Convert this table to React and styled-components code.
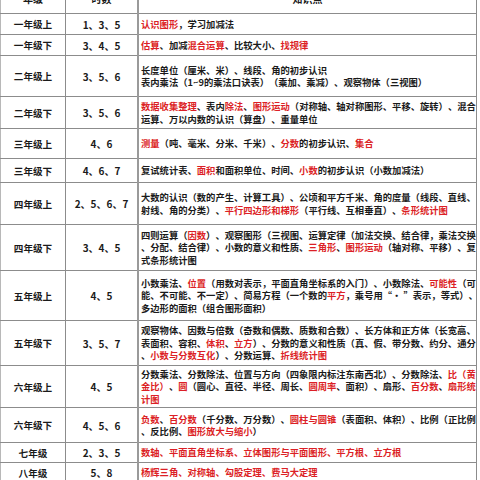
import React from 'react';
import styled, { createGlobalStyle } from 'styled-components';

const GlobalStyle = createGlobalStyle`
  html, body {
    margin: 0;
    padding: 0;
    background: #ffffff;
    overflow: hidden;
  }
  body {
    font-family: "Noto Sans CJK SC", "Noto Sans", sans-serif;
    color: #1a1a1a;
  }
`;

const Page = styled.div`
  width: 480px;
  height: 480px;
  overflow: hidden;
`;

const Table = styled.table`
  margin-top: -20px;
  border-collapse: collapse;
  table-layout: fixed;
  width: 477px;
  text-spacing-trim: space-all;
`;

const Row = styled.tr`
  height: ${(p) => p.h}px;
`;

const Cell = styled.td`
  border: 1px solid #8c8c8c;
  padding: 0;
  vertical-align: middle;
  text-align: center;
  font-weight: 700;
  font-size: 9.6px;
  white-space: nowrap;
  overflow: hidden;
`;

const GradeCell = styled(Cell)`
  width: 64px;
  border-left-color: #b8b8b8;
`;

const UnitCell = styled(Cell)`
  width: 71px;
  font-size: 10px;
  border-right: 2px solid #9a9a9a;
`;

const TopicCell = styled(Cell)`
  text-align: left;
  padding-left: 2px;
  font-size: 9.3px;
  line-height: 12.5px;
  letter-spacing: 0;
`;

const HeadCell = styled(Cell)`
  font-size: 10px;
  line-height: 12px;
  vertical-align: bottom;
  padding-bottom: 8px;
`;

const Line = styled.div`
  white-space: nowrap;
`;

const Mark = styled.span`
  color: #dc1f26;
`;

const rows = [
  { g: '一年级上', u: '1、3、5', h: 21, t: ['[认识图形]，学习加减法'] },
  { g: '一年级下', u: '3、4、5', h: 21, t: ['[估算]、加减[混合运算]、比较大小、[找规律]'] },
  {
    g: '二年级上', u: '3、5、6', h: 41,
    t: ['长度单位（厘米、米）、线段、角的初步认识', '表内乘法（1~9的乘法口诀表）（乘加、乘减）、观察物体（三视图）']
  },
  {
    g: '二年级下', u: '3、5、6', h: 32,
    t: ['[数据收集整理]、表内[除法]、[图形运动]（对称轴、轴对称图形、平移、旋转）、混合', '运算、万以内数的认识（算盘）、重量单位']
  },
  { g: '三年级上', u: '4、6', h: 30, t: ['[测量]（吨、毫米、分米、千米）、[分数]的初步认识、[集合]'] },
  { g: '三年级下', u: '4、6、7', h: 24, t: ['复试统计表、[面积]和面积单位、时间、[小数]的初步认识（小数加减法）'] },
  {
    g: '四年级上', u: '2、5、6、7', h: 42,
    t: ['大数的认识（数的产生、计算工具）、公顷和平方千米、角的度量（线段、直线、', '射线、角的分类）、[平行四边形和梯形]（平行线、互相垂直）、[条形统计图]']
  },
  {
    g: '四年级下', u: '3、4、5', h: 46,
    t: [
      '四则运算（[因数]）、观察图形（三视图、运算定律（加法交换、结合律，乘法交换',
      '、分配、结合律）、小数的意义和性质、[三角形]、[图形运动]（轴对称、平移）、复',
      '式条形统计图'
    ]
  },
  {
    g: '五年级上', u: '4、5', h: 50,
    t: [
      '小数乘法、[位置]（用数对表示，平面直角坐标系的入门）、小数除法、[可能性]（可',
      '能、不可能、不一定）、简易方程（一个数的[平方]，乘号用“• ”表示，等式）、',
      '多边形的面积（组合图形面积）'
    ]
  },
  {
    g: '五年级下', u: '3、5、7', h: 45,
    t: [
      '观察物体、因数与倍数（奇数和偶数、质数和合数）、长方体和正方体（长宽高、',
      '表面积、容积、[体积]、[立方]）、分数的意义和性质（真、假、带分数、约分、通分',
      '、[小数与分数互化]）、分数运算、[折线统计图]'
    ]
  },
  {
    g: '六年级上', u: '4、5', h: 42,
    t: [
      '分数乘法、分数除法、位置与方向（四象限内标注东南西北）、分数除法、[比（黄]',
      '[金比）]、[圆]（圆心、直径、半径、周长、[圆周率]、面积）、扇形、[百分数]、[扇形统]',
      '[计图]'
    ]
  },
  {
    g: '六年级下', u: '4、5、6', h: 35,
    t: ['[负数]、[百分数]（千分数、万分数）、[圆柱与圆锥]（表面积、体积）、比例（正比例', '、反比例、[图形放大与缩小]）']
  },
  { g: '七年级', u: '2、3、5', h: 20, t: ['[数轴、平面直角坐标系、立体图形与平面图形、平方根、立方根]'] },
  { g: '八年级', u: '5、8', h: 20, t: ['[杨辉三角、对称轴、勾股定理、费马大定理]'] }
];

// "[...]" parts are the red highlights
const renderLine = (text) =>
  text.split(/(\[[^\]]+\])/).filter(Boolean).map((part, i) =>
    part.startsWith('[') ? <Mark key={i}>{part.slice(1, -1)}</Mark> : <span key={i}>{part}</span>
  );

const App = () => (
  <Page>
    <GlobalStyle />
    <Table>
      <tbody>
        <Row h={33}>
          <HeadCell as={GradeCell}>年级</HeadCell>
          <HeadCell as={UnitCell}>时数</HeadCell>
          <HeadCell>知识点</HeadCell>
        </Row>
        {rows.map((r) => (
          <Row key={r.g} h={r.h}>
            <GradeCell>{r.g}</GradeCell>
            <UnitCell>{r.u}</UnitCell>
            <TopicCell>
              {r.t.map((line, i) => (
                <Line key={i}>{renderLine(line)}</Line>
              ))}
            </TopicCell>
          </Row>
        ))}
      </tbody>
    </Table>
  </Page>
);

export default App;
